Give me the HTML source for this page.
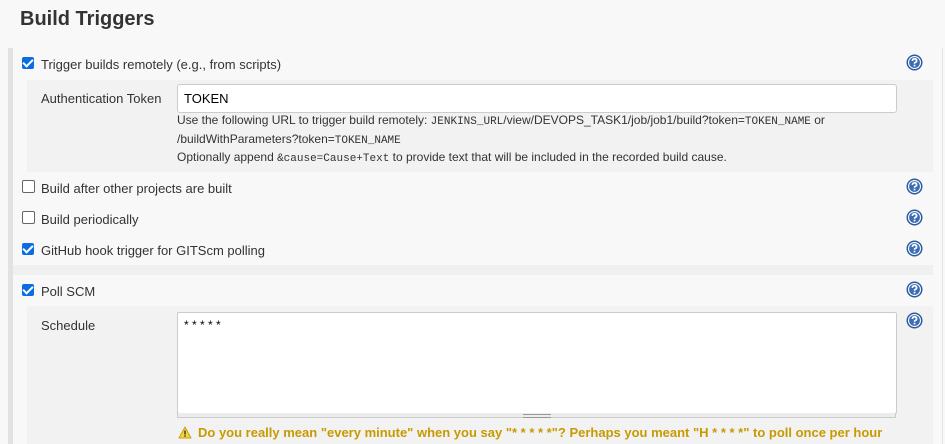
<!DOCTYPE html>
<html><head><style>
body{margin:0;width:945px;height:444px;overflow:hidden;background:#f8f8f8;font-family:"Liberation Sans",Arial,sans-serif;font-size:13px;color:#333;position:relative}
.a{position:absolute}
h1{position:absolute;left:20px;top:8px;margin:0;font-size:20px;font-weight:bold;color:#333}
.bar{left:8px;top:48px;width:5px;height:396px;background:#e2e2e2}
.rb{left:942px;top:48px;width:1px;height:396px;background:#e4e4e4}
.nest{left:27px;width:906px;background:#f2f2f2}
.cb{width:12px;height:12px;border-radius:2px}
.on{background:#0a6de0}
.on:after{content:"";position:absolute;left:3px;top:0px;width:4px;height:8px;border:solid #fff;border-width:0 2px 2px 0;transform:rotate(45deg)}
.off{border:1px solid #666;background:#fff;width:11px;height:11px}
.help{width:17px;height:17px}
.in{background:#fff;border:1px solid #ccc;border-radius:3px}
.mono{font-family:"Liberation Mono",monospace;font-size:11px;line-height:0}
</style></head><body>
<h1>Build Triggers</h1>
<div class="a bar"></div>
<div class="a rb"></div>
<div class="a nest" style="top:80px;height:92px"></div>
<div class="a" style="left:13px;top:265px;width:920px;height:10px;background:#f0f0f0"></div>
<div class="a nest" style="top:306px;height:138px"></div>

<div class="a cb on" style="left:22px;top:57px"></div>
<div class="a" style="left:41px;top:57px">Trigger builds remotely (e.g., from scripts)</div>
<div class="a" style="left:41px;top:91px">Authentication Token</div>
<div class="a in" style="left:177px;top:84px;width:718px;height:27px"></div>
<div class="a" style="left:184px;top:91px;color:#000">TOKEN</div>
<div class="a" style="left:177px;top:111px;font-size:12px;line-height:18.5px;width:720px">Use the following URL to trigger build remotely: <span class="mono">JENKINS_URL</span>/view/DEVOPS_TASK1/job/job1/build?token=<span class="mono">TOKEN_NAME</span> or<br>/buildWithParameters?token=<span class="mono">TOKEN_NAME</span><br>Optionally append <span class="mono">&amp;cause=Cause+Text</span> to provide text that will be included in the recorded build cause.</div>

<div class="a cb off" style="left:22px;top:180px"></div>
<div class="a" style="left:41px;top:181px">Build after other projects are built</div>
<div class="a cb off" style="left:22px;top:211px"></div>
<div class="a" style="left:41px;top:212px">Build periodically</div>
<div class="a cb on" style="left:22px;top:243px"></div>
<div class="a" style="left:41px;top:243px">GitHub hook trigger for GITScm polling</div>
<div class="a cb on" style="left:22px;top:284px"></div>
<div class="a" style="left:41px;top:284px">Poll SCM</div>

<div class="a" style="left:41px;top:318px">Schedule</div>
<div class="a in" style="left:177px;top:312px;width:718px;height:100px;border-radius:2px"></div>
<div class="a" style="left:184px;top:318px;color:#000;font-size:12px">* * * * *</div>
<div class="a" style="left:177px;top:413px;width:719px;height:5px;background:#ececec;border:1px solid #ccc;border-top:none;box-sizing:border-box"></div>
<div class="a" style="left:523px;top:414px;width:28px;height:2px;border-top:1px solid #999;border-bottom:1px solid #999"></div>
<svg class="a" style="left:178px;top:426px" width="14" height="13" viewBox="0 0 14 13"><path d="M7 1 L13 12 L1 12 Z" fill="#f5d33b" stroke="#c9a019" stroke-linejoin="round"/><rect x="6.3" y="4.5" width="1.4" height="4" fill="#333"/><rect x="6.3" y="9.3" width="1.4" height="1.4" fill="#333"/></svg>
<div class="a" style="left:198px;top:425px;color:#c79a00;font-weight:bold">Do you really mean "every minute" when you say "* * * * *"? Perhaps you meant "H * * * *" to poll once per hour</div>

<svg width="0" height="0" style="position:absolute"><defs><g id="h"><circle cx="8.5" cy="8.5" r="8" fill="#2e5b9c"/><circle cx="8.5" cy="8.5" r="6.5" fill="#fff"/><circle cx="8.5" cy="8.5" r="5.4" fill="#3a6db3"/><path d="M6.4 7 Q6.4 4.8 8.5 4.8 Q10.6 4.8 10.6 6.7 Q10.6 8 9.1 8.5 Q8.5 8.8 8.5 9.7" stroke="#fff" stroke-width="1.7" fill="none"/><rect x="7.7" y="10.7" width="1.7" height="1.7" fill="#fff"/></g></defs></svg>
<svg class="a help" style="left:906px;top:54px"><use href="#h"/></svg>
<svg class="a help" style="left:906px;top:178px"><use href="#h"/></svg>
<svg class="a help" style="left:906px;top:209px"><use href="#h"/></svg>
<svg class="a help" style="left:906px;top:240px"><use href="#h"/></svg>
<svg class="a help" style="left:906px;top:281px"><use href="#h"/></svg>
<svg class="a help" style="left:906px;top:312px"><use href="#h"/></svg>
</body></html>
